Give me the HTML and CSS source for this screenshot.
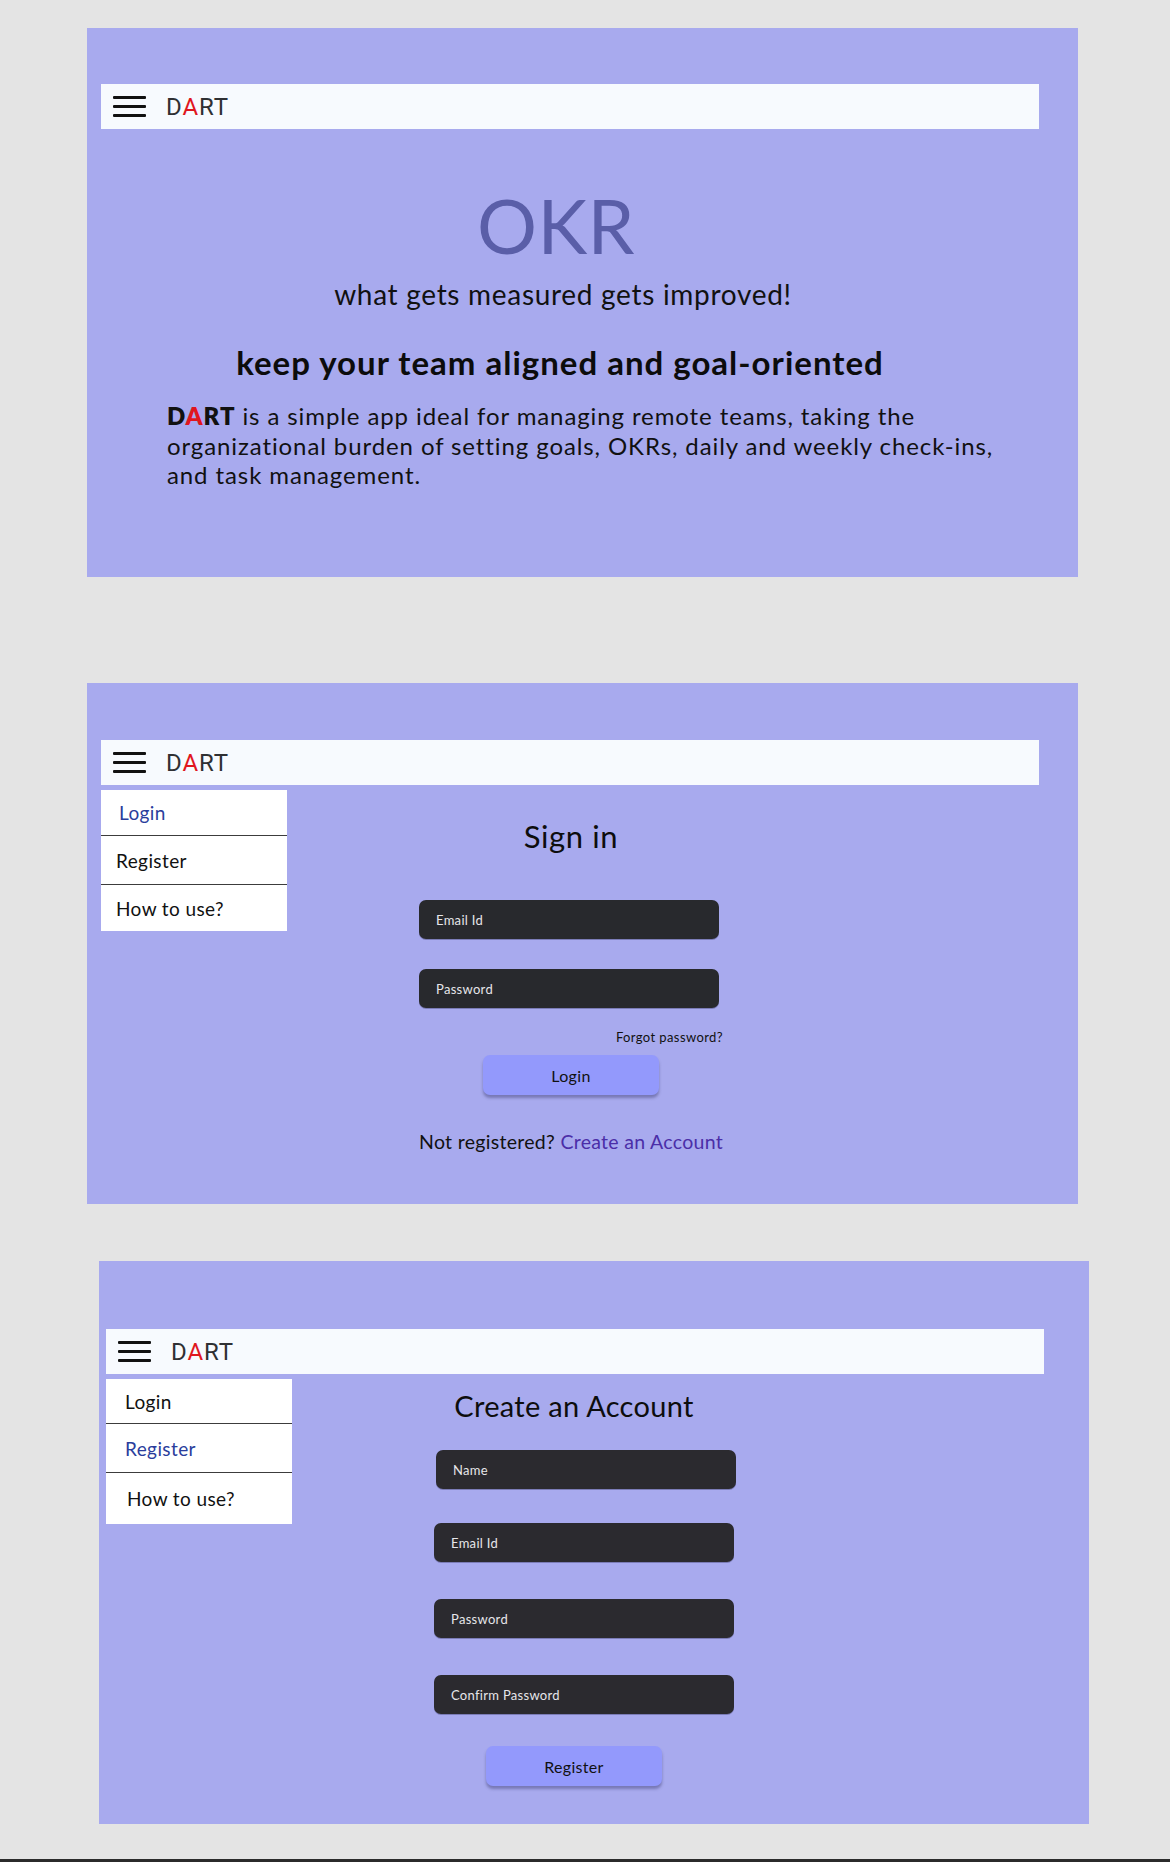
FILE: index.html
```html
<!DOCTYPE html>
<html lang="en">
<head>
<meta charset="utf-8">
<title>DART</title>
<link rel="stylesheet" href="styles.css">
</head>
<body>
<div class="page">

  <section class="panel panel-home">
    <header class="navbar">
      <span class="burger"><i></i><i></i><i></i></span>
      <span class="logo">D<b>A</b>RT</span>
    </header>
    <div class="hero">
      <h1 class="okr">OKR</h1>
      <p class="tagline">what gets measured gets improved!</p>
      <h2 class="headline">keep your team aligned and goal-oriented</h2>
      <p class="intro"><strong>D<span class="red">A</span>RT</strong> is a simple app ideal for managing remote teams, taking the<br>organizational burden of setting goals, OKRs, daily and weekly check-ins,<br>and task management.</p>
    </div>
  </section>

  <section class="panel panel-login">
    <header class="navbar">
      <span class="burger"><i></i><i></i><i></i></span>
      <span class="logo">D<b>A</b>RT</span>
    </header>
    <div class="body-row">
      <nav class="menu">
        <a class="item active first">Login</a>
        <a class="item mid">Register</a>
        <a class="item last">How to use?</a>
      </nav>
      <form class="form form-login">
        <h3 class="form-title">Sign in</h3>
        <div class="field field-email">Email Id</div>
        <div class="field field-pass">Password</div>
        <div class="forgot">Forgot password?</div>
        <button type="button" class="btn">Login</button>
        <p class="alt">Not registered? <a class="link">Create an Account</a></p>
      </form>
    </div>
  </section>

  <section class="panel panel-register">
    <header class="navbar">
      <span class="burger"><i></i><i></i><i></i></span>
      <span class="logo">D<b>A</b>RT</span>
    </header>
    <div class="body-row">
      <nav class="menu menu-reg">
        <a class="item first">Login</a>
        <a class="item mid active">Register</a>
        <a class="item last">How to use?</a>
      </nav>
      <form class="form form-reg">
        <h3 class="form-title">Create an Account</h3>
        <div class="field">Name</div>
        <div class="field">Email Id</div>
        <div class="field">Password</div>
        <div class="field">Confirm Password</div>
        <button type="button" class="btn">Register</button>
      </form>
    </div>
  </section>

</div>
<div class="bottom-bar"></div>
</body>
</html>
```

FILE: styles.css
```css
* { box-sizing: border-box; }

html, body {
  margin: 0;
  padding: 0;
}

body {
  background: #e4e4e4;
  font-family: Lato, "Noto Sans", sans-serif;
  color: #111;
  width: 1170px;
  height: 1862px;
  overflow: hidden;
  position: relative;
}

.page {
  padding-top: 28px;
}

.panel {
  background: #a8aaee;
  width: 991px;
}

.panel-home {
  margin-left: 87px;
  height: 549px;
  padding: 56px 0 0 14px;
}

.panel-login {
  margin-left: 87px;
  margin-top: 106px;
  height: 521px;
  padding: 57px 0 0 14px;
}

.panel-register {
  margin-left: 99px;
  margin-top: 57px;
  width: 990px;
  height: 563px;
  padding: 68px 0 0 7px;
}

/* navbar */
.navbar {
  width: 938px;
  height: 45px;
  background: #f7fafe;
  display: flex;
  align-items: center;
  padding-left: 12px;
}

.burger {
  display: flex;
  flex-direction: column;
  gap: 6px;
  width: 33px;
}

.burger i {
  display: block;
  height: 3px;
  background: #111;
  border-radius: 1px;
}

.logo {
  margin-left: 20px;
  font-family: Roboto, "Liberation Sans", sans-serif;
  font-size: 24px;
  color: #2f3033;
  letter-spacing: 0.9px;
}

.logo b, .red {
  color: #e0161e;
  font-weight: inherit;
}

/* hero */
.hero {
  width: 938px;
  text-align: center;
}

.okr {
  margin: 56px 0 0 -28px;
  font-size: 75px;
  line-height: 80px;
  font-weight: 400;
  color: #5a5ea8;
  letter-spacing: 0.5px;
}

.tagline {
  margin: 12px 0 0 -14px;
  font-size: 28px;
  line-height: 34px;
  letter-spacing: 0.7px;
  color: #111;
}

.headline {
  margin: 31px 0 0 -20px;
  font-size: 33px;
  line-height: 40px;
  letter-spacing: 1px;
  font-weight: 700;
  color: #0c0c0c;
}

.intro {
  margin: 19px 0 0 66px;
  width: 880px;
  text-align: left;
  font-size: 24px;
  line-height: 29.5px;
  letter-spacing: 0.9px;
  color: #111;
}

.intro strong {
  font-weight: 800;
}

/* body row */
.body-row {
  display: flex;
  align-items: flex-start;
}

.menu {
  margin-top: 5px;
  width: 186px;
  background: #fff;
  display: flex;
  flex-direction: column;
}

.item {
  display: flex;
  align-items: center;
  font-size: 19px;
  letter-spacing: 0.4px;
  color: #111;
  border-bottom: 1px solid #3c3c3c;
  padding-left: 15px;
}

.item.first { height: 46px; padding-left: 18px; }
.item.mid { height: 49px; }
.item.last { height: 46px; border-bottom: 0; }

.menu-reg .item.first { height: 45px; padding-left: 19px; }
.menu-reg .item.mid { height: 49px; padding-left: 19px; }
.menu-reg .item.last { height: 51px; padding-left: 21px; }

.item.active { color: #2a3d9c; }

/* forms */
.form {
  display: flex;
  flex-direction: column;
  align-items: center;
}

.form-login {
  margin-left: 132px;
  width: 304px;
}

.form-reg {
  margin-left: 122px;
  width: 320px;
}

.form-title {
  margin: 0;
  font-size: 31px;
  line-height: 36px;
  letter-spacing: 0.6px;
  font-weight: 400;
  color: #0d0d0d;
  white-space: nowrap;
}

.form-login .form-title { margin-top: 33px; }
.form-reg .form-title {
  margin-top: 14px;
  font-size: 29px;
  letter-spacing: 0.3px;
}

.field {
  width: 300px;
  height: 39px;
  border-radius: 7px;
  background: #2b2a2f;
  box-shadow: 0 1px 0 rgba(40, 40, 80, 0.35);
  color: #e6e6ea;
  font-size: 13px;
  letter-spacing: 0.3px;
  display: flex;
  align-items: center;
  padding-left: 17px;
  align-self: flex-start;
}

.form-login .field { background: #28292d; }
.form-login .field-email { margin-top: 46px; }
.form-login .field-pass { margin-top: 30px; }

.form-reg .field { margin-top: 34px; margin-left: 20px; }
.form-reg .field:nth-of-type(1) { margin-top: 26px; margin-left: 22px; }
.form-reg .field:nth-of-type(3),
.form-reg .field:nth-of-type(4) { margin-top: 37px; }

.forgot {
  align-self: flex-end;
  margin-top: 21px;
  font-size: 13px;
  line-height: 16px;
  letter-spacing: 0.4px;
  color: #111;
}

.btn {
  margin-top: 10px;
  width: 176px;
  height: 40px;
  border: 0;
  border-radius: 7px;
  background: #9399fc;
  box-shadow: 0 3px 3px rgba(60, 60, 110, 0.45);
  font-family: inherit;
  font-size: 16px;
  letter-spacing: 0.3px;
  color: #111;
}

.form-reg .btn { margin-top: 32px; }

.alt {
  margin: 35px 0 0;
  font-size: 19.5px;
  line-height: 24px;
  letter-spacing: 0.3px;
  color: #111;
  white-space: nowrap;
  align-self: flex-start;
}

.link { color: #4b2ea8; }

.bottom-bar {
  position: absolute;
  left: 0;
  right: 0;
  bottom: 0;
  height: 3px;
  background: #2b2b2b;
}
```
